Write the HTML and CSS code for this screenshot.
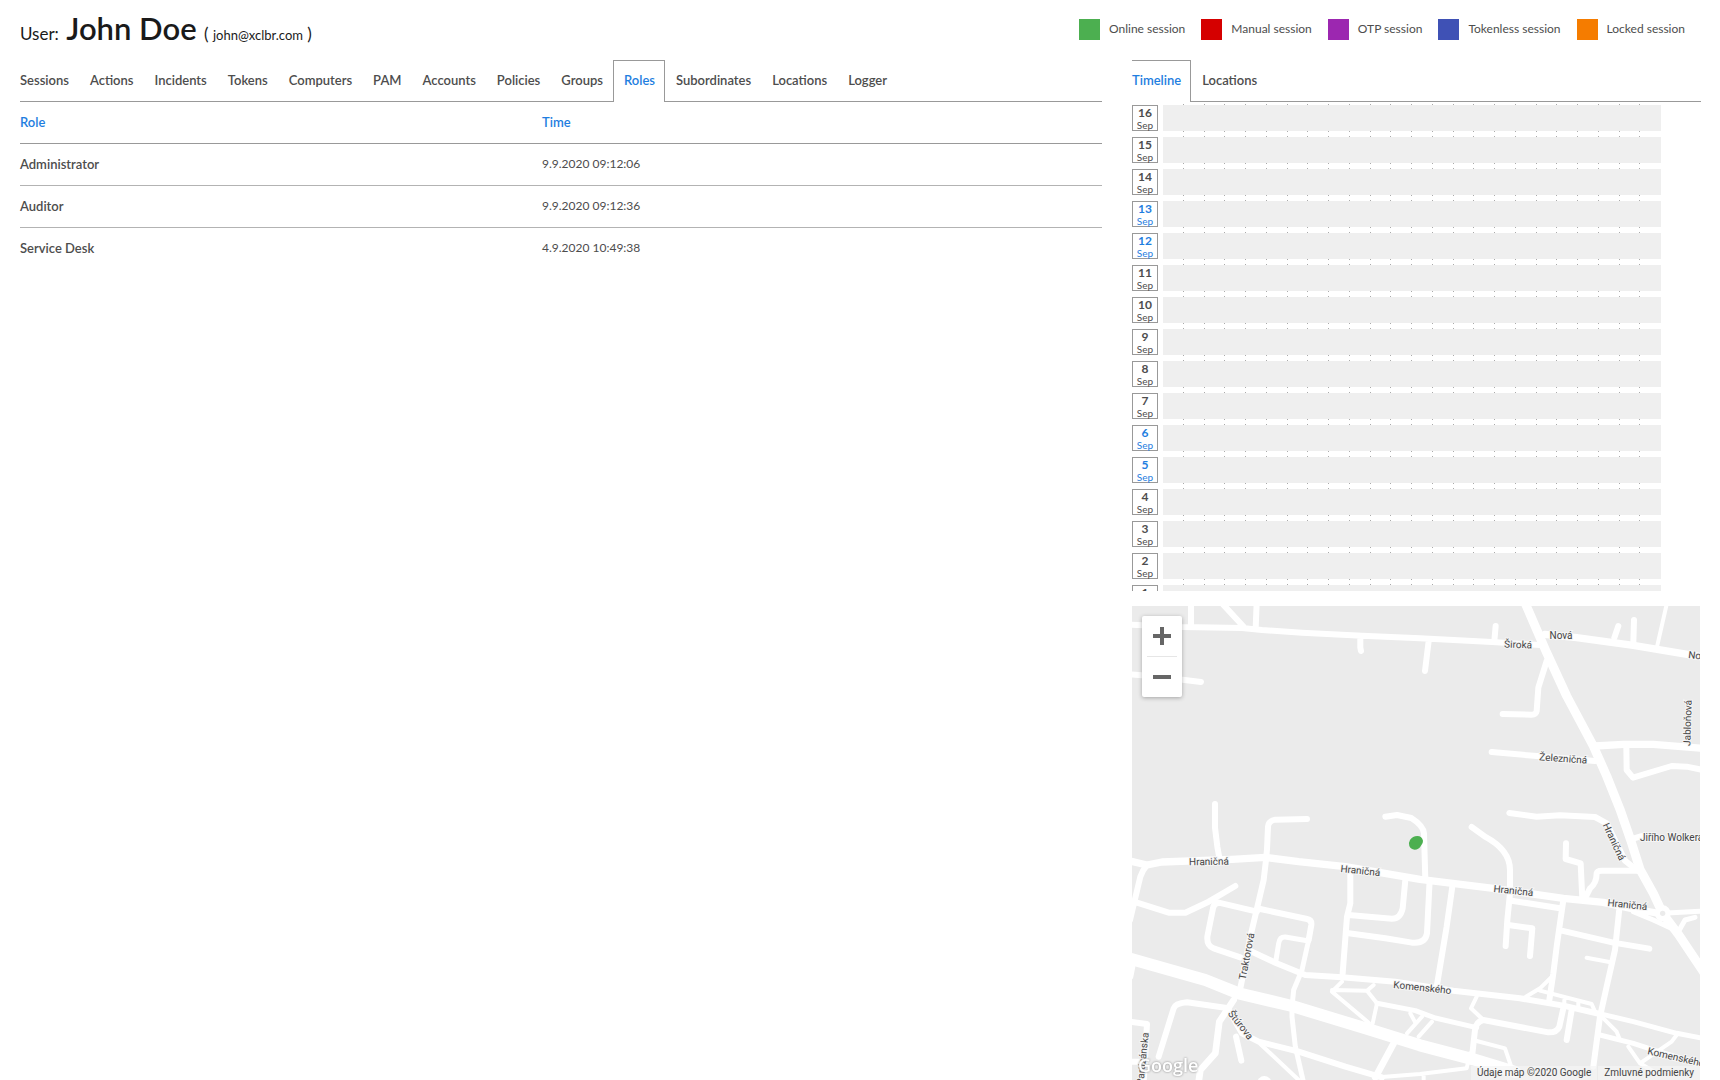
FILE: index.html
```html
<!DOCTYPE html>
<html lang="en">
<head>
<meta charset="utf-8">
<title>User: John Doe</title>
<link rel="stylesheet" href="styles.css">
</head>
<body>
<div class="page">
  <header class="header">
    <h1 class="user">User: <strong class="user-name">John Doe</strong> <span class="user-mail">( <small>john@xclbr.com</small> )</span></h1>
    <ul class="legend">
      <li><span class="swatch online"></span>Online session</li>
      <li><span class="swatch manual"></span>Manual session</li>
      <li><span class="swatch otp"></span>OTP session</li>
      <li><span class="swatch tokenless"></span>Tokenless session</li>
      <li><span class="swatch locked"></span>Locked session</li>
    </ul>
  </header>

  <main class="content">
    <nav class="tabs" aria-label="User details">
      <a href="#sessions">Sessions</a>
      <a href="#actions">Actions</a>
      <a href="#incidents">Incidents</a>
      <a href="#tokens">Tokens</a>
      <a href="#computers">Computers</a>
      <a href="#pam">PAM</a>
      <a href="#accounts">Accounts</a>
      <a href="#policies">Policies</a>
      <a href="#groups">Groups</a>
      <a href="#roles" class="active" aria-current="page">Roles</a>
      <a href="#subordinates">Subordinates</a>
      <a href="#locations">Locations</a>
      <a href="#logger">Logger</a>
    </nav>
    <table class="roles">
      <thead>
        <tr><th scope="col">Role</th><th scope="col">Time</th></tr>
      </thead>
      <tbody>
        <tr><th scope="row">Administrator</th><td>9.9.2020 09:12:06</td></tr>
        <tr><th scope="row">Auditor</th><td>9.9.2020 09:12:36</td></tr>
        <tr><th scope="row">Service Desk</th><td>4.9.2020 10:49:38</td></tr>
      </tbody>
    </table>
  </main>

  <aside class="side">
    <nav class="tabs" aria-label="Activity">
      <a href="#timeline" class="active" aria-current="page">Timeline</a>
      <a href="#map">Locations</a>
    </nav>
    <div class="timeline">
      <div class="days">
        <div class="hours" aria-hidden="true">
          <i></i><i></i><i></i><i></i><i></i><i></i><i></i><i></i><i></i><i></i><i></i><i></i>
          <i></i><i></i><i></i><i></i><i></i><i></i><i></i><i></i><i></i><i></i><i></i><i></i>
        </div>
        <div class="day"><time><b>16</b>Sep</time><div class="bar"></div></div>
        <div class="day"><time><b>15</b>Sep</time><div class="bar"></div></div>
        <div class="day"><time><b>14</b>Sep</time><div class="bar"></div></div>
        <div class="day weekend"><time><b>13</b>Sep</time><div class="bar"></div></div>
        <div class="day weekend"><time><b>12</b>Sep</time><div class="bar"></div></div>
        <div class="day"><time><b>11</b>Sep</time><div class="bar"></div></div>
        <div class="day"><time><b>10</b>Sep</time><div class="bar"></div></div>
        <div class="day"><time><b>9</b>Sep</time><div class="bar"></div></div>
        <div class="day"><time><b>8</b>Sep</time><div class="bar"></div></div>
        <div class="day"><time><b>7</b>Sep</time><div class="bar"></div></div>
        <div class="day weekend"><time><b>6</b>Sep</time><div class="bar"></div></div>
        <div class="day weekend"><time><b>5</b>Sep</time><div class="bar"></div></div>
        <div class="day"><time><b>4</b>Sep</time><div class="bar"></div></div>
        <div class="day"><time><b>3</b>Sep</time><div class="bar"></div></div>
        <div class="day"><time><b>2</b>Sep</time><div class="bar"></div></div>
        <div class="day"><time><b>1</b>Sep</time><div class="bar"></div></div>
      </div>
    </div>
    <div class="map">
      <svg class="map-canvas" viewBox="0 0 568 474" preserveAspectRatio="xMinYMin slice" role="img" aria-label="Map">
        <g class="roads" transform="scale(.33333)">
          <!-- north-west -->
          <path class="w18" d="M-6 56L150 63L330 66L390 72L510 80L690 89L864 97L1094 109L1224 117M177-10V60M270-8L335 62M374-10L371 68M685 95V125L687 135M890 105L879 195M-6 205L60 210L207 228"/>
          <path class="w18" d="M249 594V665L256 722L262 755M525 639L430 641Q409 645 408 662L405 730L402 762L395 822L375 907L355 992L328 1132L322 1160"/>
          <path class="w18" d="M760 632L795 627L838 636Q875 660 876 682L880 822M893 822L885 982Q880 1014 840 1010L760 997L650 982"/>
          <!-- north-east -->
          <g transform="translate(864 0)">
            <path class="w26" d="M315-10L380 140L440 270L520 420L560 510L600 610L632 702L660 790L700 862L728 922L775 985L860 1112"/>
            <path class="w22" d="M375 85L470 95L640 118L850 153M525 420L610 415L700 415L850 427"/>
            <path class="w18" d="M227 60L223 105M595 60L583 95M642 42L640 110M380 165L355 245L350 315Q348 326 335 326L248 324M215 438L360 451L525 465M619 420L620 492L639 515L755 480L800 482L850 492M268 621L350 632L420 628L525 633L560 652L615 764L650 792M155 663L195 692Q270 732 270 792V862L262 942L257 1020"/>
            <path class="w18" d="M438 712L437 759L482 772L487 877M495 877L510 847Q530 832 530 802Q532 794 545 794H660M640 698L665 690"/>
            <path class="w12" d="M740-5L712 118"/>
          </g>
          <!-- south-west -->
          <g transform="translate(0 702)">
            <path class="w22" d="M-6 63L45 75L90 66L300 58L400 52L500 65L640 80L864 118L1084 145L1294 175L1414 187L1504 207L1592 222"/>
            <path class="w18" d="M45 75Q32 90 25 110L-6 240M15 188L110 218H160L230 185L310 138M375 215L260 188Q245 190 243 205L226 290Q224 318 245 325L325 352M360 335L430 368L520 405L630 412L790 425L964 452L1164 475L1294 497L1404 522"/>
            <path class="w18" d="M385 207L525 237Q540 240 538 255L530 300M655 105V190L645 230L632 400M650 225L780 236Q805 236 812 205L820 120"/>
            <path class="w14" d="M530 300L510 390L485 450L480 500V530L490 620L514 725M530 303L460 291Q443 290 440 310L432 360"/>
            <path class="w36" d="M-10 355L220 420L320 460L480 498L700 565L864 616L1024 658L1150 696"/>
            <path class="w12" d="M630 425L600 455L710 548M600 450L705 452L725 435M705 452L735 490L722 550M835 520L850 548M870 530L825 580M900 545L860 590M385 612L500 720M740 712L864 702L1004 685L1014 640M875 705V725"/>
            <path class="w14" d="M735 490L850 512L910 534L1034 563"/>
            <path class="w20" d="M785 610L730 712M305 480L262 545L250 640L205 690L200 725M-6 410L0 380"/>
            <path class="w18" d="M290 505L165 487Q130 490 125 505L80 650M290 510L330 580L380 605L500 635L640 680L750 712M312 590L328 662M-6 545L45 552L35 725M-6 665H20"/>
            <circle class="fill" cx="397" cy="730" r="22"/>
          </g>
          <!-- south-east -->
          <g transform="translate(864 702)">
            <path class="w18" d="M97 140L80 260L50 440M275 182L420 205M265 255L337 265L330 348M430 180L410 320L400 400L388 480M425 272L580 308L688 326M598 207L585 330L560 440L540 530L520 680M430 505L418 560Q410 578 385 577L190 540Q168 545 165 570L155 660M455 510L440 600"/>
            <path class="w12" d="M398 408L360 445L310 475M360 452L515 492L525 515M433 480V500M475 487V505M500 353L568 366M170 470L153 505L185 535M170 603L255 625L272 675M545 530L590 575L600 600M770 585L755 605L660 670M625 620L660 670L710 700"/>
            <path class="w14" d="M535 520L640 545L770 580L850 595M540 585L640 610L700 630L850 675M728 220L850 213M775 275L795 240L825 232M640 215L700 240L765 270"/>
            <circle class="fill" cx="728" cy="220" r="24"/>
            <circle class="island" cx="728" cy="220" r="8"/>
          </g>
          <path class="place" d="M834 702Q842 690 856 690Q870 690 873 704Q874 712 866 721Q860 731 848 731Q836 730 832 720Q829 710 834 702Z"/>
        </g>
        <g class="labels">
          <text transform="translate(386 42) rotate(2)">Široká</text>
          <text transform="translate(429 33)">Nová</text>
          <text class="start" transform="translate(556 52) rotate(7)">Nová</text>
          <text transform="translate(559 117) rotate(-88)">Jabloňová</text>
          <text transform="translate(431 156) rotate(4)">Železničná</text>
          <text transform="translate(479 237) rotate(65)">Hraničná</text>
          <text class="start" transform="translate(508 235)">Jiřího Wolkera</text>
          <text transform="translate(77 259) rotate(-1)">Hraničná</text>
          <text transform="translate(228 268) rotate(6)">Hraničná</text>
          <text transform="translate(381 288) rotate(6)">Hraničná</text>
          <text transform="translate(495 302) rotate(6)">Hraničná</text>
          <text transform="translate(118 351) rotate(-79)">Traktorová</text>
          <text transform="translate(290 385) rotate(6)">Komenského</text>
          <text transform="translate(106 421) rotate(52)">Štúrova</text>
          <text transform="translate(14 453) rotate(-84)">Partizánska</text>
          <text class="start" transform="translate(515 448) rotate(13)">Komenského</text>
        </g>
        <text class="brand" x="6" y="466">Google</text>
      </svg>
      <div class="zoom">
        <button type="button" aria-label="Zoom in"><svg viewBox="0 0 18 18"><path d="M7 0h4v7h7v4h-7v7H7v-7H0V7h7z"/></svg></button>
        <button type="button" aria-label="Zoom out"><svg viewBox="0 0 18 18"><path d="M0 7h18v4H0z"/></svg></button>
      </div>
      <div class="credits"><span>Údaje máp ©2020 Google</span><a href="#terms">Zmluvné podmienky</a></div>
    </div>
  </aside>
</div>
</body>
</html>
```
FILE: styles.css
```css
* { box-sizing: border-box; }

body {
  margin: 0;
  background: #fff;
  color: #4d4d4d;
  font: 12px/20px Lato, "Open Sans", sans-serif;
}

a { color: inherit; text-decoration: none; }

.page {
  display: grid;
  grid-template-columns: minmax(0, 1082fr) minmax(0, 569fr);
  grid-template-rows: 60px minmax(0, 1fr);
  column-gap: 30px;
  height: 100vh;
  padding: 0 19px 0 20px;
}

/* Header */
.header {
  grid-column: 1 / -1;
  display: flex;
  justify-content: space-between;
  align-items: flex-start;
}

.user {
  margin: 0;
  padding-top: 8px;
  color: #1a1a1a;
  font-size: 17px;
  font-weight: 400;
  line-height: 40px;
}

.user-name { margin-left: 3px; font-size: 31px; font-weight: 600; }
.user-mail { margin-left: 3px; }
.user-mail small { font-size: 13px; }

.legend {
  display: flex;
  gap: 16px;
  margin: 0;
  padding: 19px 16px 0 0;
  list-style: none;
}

.legend li { display: flex; gap: 9px; }
.swatch { width: 21px; height: 21px; }
.online { background: #4caf50; }
.manual { background: #d50000; }
.otp { background: #9c27b0; }
.tokenless { background: #3f51b5; }
.locked { background: #f57c00; }

/* Tabs */
.tabs {
  display: flex;
  height: 42px;
  font-size: 13px;
  font-weight: 600;
  line-height: 38px;
}

.tabs a {
  padding: 1px 10px 0 11px;
  border-bottom: 1px solid #999;
}

.tabs .active {
  padding: 0 9px 0 10px;
  border: 1px solid #999;
  border-bottom: 0;
  color: #1f7ee0;
}

.tabs a:first-child { padding-left: 0; border-left: 0; }
.tabs::after { content: ""; flex: 1; border-bottom: 1px solid #999; }

/* Roles table */
.roles {
  width: 100%;
  border-spacing: 0;
  table-layout: fixed;
  text-align: left;
}

.roles th, .roles td { height: 42px; padding: 0 0 2px; border-bottom: 1px solid #b3b3b3; }
.roles th { font-size: 13px; font-weight: 600; }
.roles th:first-child { width: 522px; }
.roles tbody tr:last-child > * { border-bottom: 0; }
.roles thead th { color: #1f7ee0; border-color: #999; }

/* Timeline */
.side { display: flex; flex-direction: column; min-height: 0; }
.timeline { flex: 1; min-height: 0; overflow: hidden; }

.days {
  position: relative;
  display: grid;
  gap: 6px;
  padding: 3px 40px 0 0;
}

.hours {
  position: absolute;
  inset: 2px 40px 0 31px;
  display: grid;
  grid-template-columns: repeat(24, 1fr);
}

.hours i {
  background: linear-gradient(#aaa 1px, transparent 1px 27px, #aaa 27px 28px, transparent 28px) right top / 1px 32px repeat-y;
}

.hours i:last-child { background: none; }

.day { position: relative; display: flex; gap: 5px; height: 26px; }

.day time {
  width: 26px;
  border: 1px solid #999;
  background: #fff;
  font-size: 10px;
  line-height: 10px;
  text-align: center;
}

.day b { display: block; font-size: 12px; line-height: 14px; }
.bar { flex: 1; background: #efefef; }
.weekend time { color: #1f7ee0; }

/* Map */
.map {
  position: relative;
  flex: 0 0 474px;
  margin: 15px 1px 0 0;
  overflow: hidden;
  background: #ebebeb;
  font-family: Roboto, sans-serif;
}

.map-canvas { display: block; width: 100%; height: 100%; }
.roads path { fill: none; stroke: #fff; stroke-linecap: round; stroke-linejoin: round; }
.roads .w12 { stroke-width: 12px; }
.roads .w14 { stroke-width: 15px; }
.roads .w18 { stroke-width: 18px; }
.roads .w20 { stroke-width: 20px; }
.roads .w22 { stroke-width: 22px; }
.roads .w26 { stroke-width: 27px; }
.roads .w36 { stroke-width: 36px; }
.roads .fill { fill: #fff; }
.roads .island { fill: #ebebeb; }
.roads .place { fill: #4caf50; stroke: none; }

.labels text {
  fill: #444;
  stroke: #f5f5f5;
  stroke-width: 2px;
  paint-order: stroke;
  font-size: 10px;
  text-anchor: middle;
}

.labels .start { text-anchor: start; }

.brand {
  fill: #fff;
  font: 600 18px "Open Sans", sans-serif;
  filter: drop-shadow(0 0 1px #888);
}

.zoom {
  position: absolute;
  top: 10px;
  left: 10px;
  width: 40px;
  border-radius: 2px;
  background: #fff;
  box-shadow: 0 1px 4px rgba(0, 0, 0, .3);
}

.zoom button {
  display: grid;
  place-items: center;
  width: 40px;
  height: 40px;
  padding: 0;
  border: 0;
  background: none;
}

.zoom button + button { grid-template-rows: 1px 1fr; height: 41px; }
.zoom button + button::before { content: ""; width: 30px; height: 1px; background: #e6e6e6; }
.zoom svg { width: 18px; height: 18px; fill: #666; }

.credits {
  position: absolute;
  right: 0;
  bottom: 0;
  display: flex;
  gap: 1px;
  color: #444;
  font-size: 10px;
  line-height: 14px;
}

.credits > * { padding: 0 6px; background: rgba(245, 245, 245, .7); }
```
